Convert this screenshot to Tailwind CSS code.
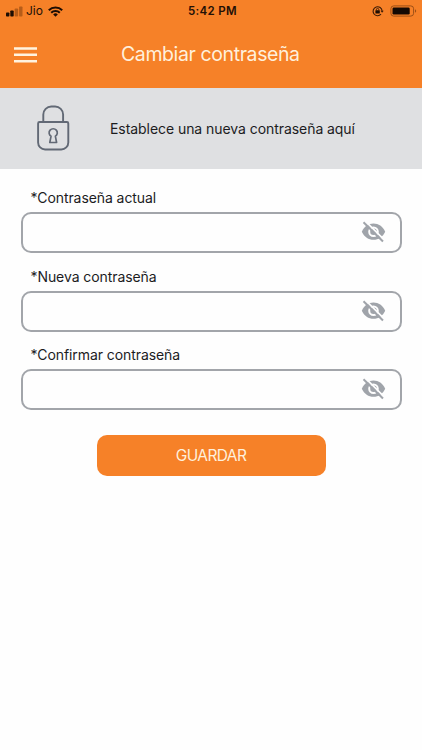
<!DOCTYPE html>
<html lang="es">
<head>
<meta charset="utf-8">
<meta name="viewport" content="width=device-width, initial-scale=1">
<title>Cambiar contraseña</title>
<script src="https://cdn.jsdelivr.net/npm/@tailwindcss/browser@4"></script>
</head>
<body class="bg-[#fefefe] font-[Inter,'Liberation_Sans',sans-serif] text-[#1c1c1e]">
<svg class="hidden">
  <symbol id="eye-off" viewBox="0 0 25 22">
    <path d="M.8 10.700C3.200 5.500 7.500 2.600 12.500 2.600s9.300 2.900 11.700 8.100c-2.400 5.200-6.700 8.100-11.700 8.100S3.200 15.900.8 10.700Z" fill="#a0a4aa"/>
    <circle cx="12.500" cy="10.700" r="4.300" fill="#a0a4aa" stroke="#fefefe" stroke-width="2"/>
    <path d="M4.300.1 24 19.600" stroke="#fefefe" stroke-width="1.800"/>
    <path d="M2.500 1.300 22 20.500" stroke="#a0a4aa" stroke-width="2"/>
  </symbol>
</svg>
<main class="flex h-[750px] w-[422px] flex-col overflow-hidden">
  <header class="h-[88px] shrink-0 bg-[#f68128]">
    <div class="grid h-[22px] grid-cols-3 items-center text-[#231006]">
      <div class="flex items-center pl-[6px]">
        <svg class="h-[11px] w-[17px]" viewBox="0 0 17 11"><rect y="6.500" width="3.400" height="4" rx=".8" fill="#1d0d03"/><rect x="4.300" y="4.500" width="3.400" height="6" rx=".8" fill="#1d0d03"/><rect x="8.700" y="2.500" width="3.400" height="8" rx=".8" fill="#b65c18"/><rect x="13.100" y=".5" width="3.400" height="10" rx=".8" fill="#b65c18"/></svg>
        <span class="ml-[3px] w-[16px] whitespace-nowrap text-[12px] leading-none">Jio</span>
        <svg class="ml-[6px] h-[11px] w-[15px]" viewBox="0 0 15 11" fill="none" stroke="#1d0d03" stroke-width="2"><path d="M.8 4.200a9.500 9.500 0 0 1 13.400 0M3.200 6.700a6.100 6.100 0 0 1 8.600 0"/><path d="M7.500 10.700 5.200 8.400a3.300 3.300 0 0 1 4.600 0Z" fill="#1d0d03" stroke="none"/></svg>
      </div>
      <span class="pl-[3px] pt-[1px] text-center text-[11.500px] font-semibold leading-none tracking-[.35px]">5:42 PM</span>
      <div class="flex items-center justify-end pr-[4px]">
        <svg class="h-[12px] w-[12px]" viewBox="0 0 12 12" fill="none" stroke="#3b1b06"><path d="M9 9.200A4.500 4.500 0 1 1 10.100 6" stroke-width="1.100"/><path d="M8.500 5.700h3.200L10.100 7.800Z" fill="#3b1b06" stroke="none"/><rect x="3.400" y="5.200" width="4.400" height="3.300" rx=".4" fill="#1d0d03" stroke="none"/><path d="M4.400 5.400V4.600a1.200 1.200 0 0 1 2.400 0v.8" stroke-width=".9"/></svg>
        <svg class="ml-[6px] h-[12px] w-[28px]" viewBox="0 0 28 12"><rect x=".9" y=".9" width="22.700" height="10.200" rx="2.800" fill="none" stroke="#9d4f16"/><rect x="2.500" y="2.500" width="17.200" height="7" rx="1.200" fill="#140903"/><path d="M25 4.300c1.600.5 1.600 2.900 0 3.400Z" fill="#9d4f16"/></svg>
      </div>
    </div>
    <div class="flex h-[66px] items-center">
      <button aria-label="Menú" class="ml-[14px] w-[23px]">
        <svg class="h-[16px] w-[23px]" viewBox="0 0 23 16" fill="#fff3df"><path d="M0 .2h23v2.500H0zM0 6.600h23v2.500H0zM0 13h23v2.500H0z"/></svg>
      </button>
      <h1 class="ml-[84px] whitespace-nowrap text-[19.500px] leading-none tracking-[-.4px] text-[#fff0dc]">Cambiar contraseña</h1>
    </div>
  </header>
  <section class="flex h-[81px] shrink-0 items-center bg-[#dfe0e2]">
    <svg class="ml-[36px] h-[48px] w-[34px]" viewBox="0 0 34 48" fill="none" stroke="#626975" stroke-width="1.900" stroke-linejoin="round"><path d="M7.300 16.500V9.500a8 8 0 0 1 8-8h3.800a8 8 0 0 1 8 8v7"/><path d="M3.500 17h27.400a1.400 1.400 0 0 1 1.400 1.400v19.100a7 7 0 0 1-7 7H9.100a7 7 0 0 1-7-7V18.400A1.400 1.400 0 0 1 3.500 17Z"/><path d="M15 31.300a4.100 4.100 0 1 1 4.400 0l1.200 6.200h-6.800Z" stroke-width="1.700"/></svg>
    <p class="ml-[40px] whitespace-nowrap text-[14px] leading-none tracking-[-.06px]">Establece una nueva contraseña aquí</p>
  </section>
  <form class="flex flex-col px-[20.500px] pt-[21px]">
    <label class="block h-[78.500px]"><span class="block h-[22px] pl-[10px] text-[14px] leading-[16px] tracking-[-.08px]">*Contraseña actual</span>
      <span class="flex h-[41px] items-center justify-end rounded-[10px] border-2 border-[#a2a5aa] pr-[14px] pb-[1px]"><svg class="h-[22px] w-[25px]"><use href="#eye-off"/></svg></span></label>
    <label class="block h-[78.500px]"><span class="block h-[22px] pl-[10px] text-[14px] leading-[16px] tracking-[-.08px]">*Nueva contraseña</span>
      <span class="flex h-[41px] items-center justify-end rounded-[10px] border-2 border-[#a2a5aa] pr-[14px] pb-[1px]"><svg class="h-[22px] w-[25px]"><use href="#eye-off"/></svg></span></label>
    <label class="block h-[78.500px]"><span class="block h-[22px] pl-[10px] text-[14px] leading-[16px] tracking-[-.08px]">*Confirmar contraseña</span>
      <span class="flex h-[41px] items-center justify-end rounded-[10px] border-2 border-[#a2a5aa] pr-[14px] pb-[1px]"><svg class="h-[22px] w-[25px]"><use href="#eye-off"/></svg></span></label>
    <button type="button" class="mt-[9.500px] h-[41px] w-[229px] self-center rounded-[10px] bg-[#f68128] text-[15.500px] tracking-[-.6px] text-[#fff0dc]">GUARDAR</button>
  </form>
</main>
</body>
</html>
